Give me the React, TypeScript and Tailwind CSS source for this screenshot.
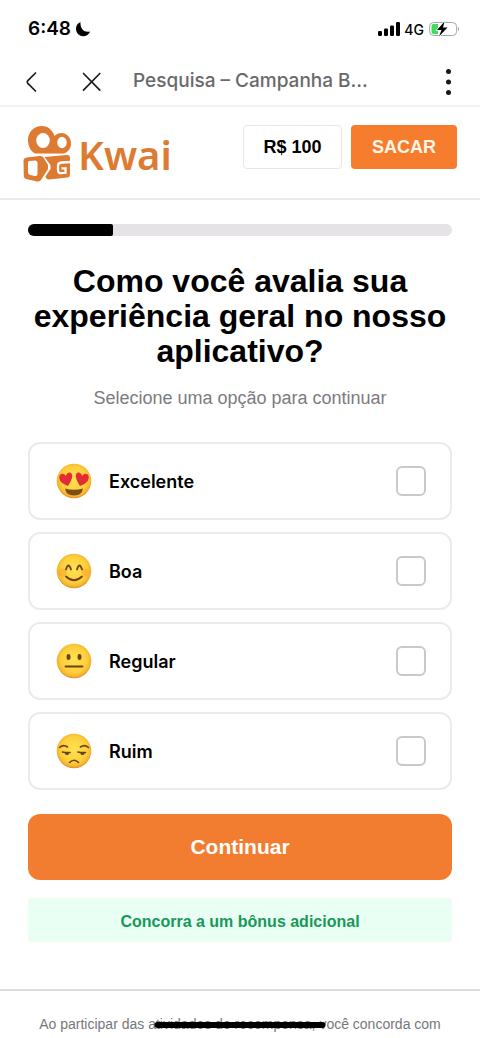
import { useState } from "react"
import type { ReactNode } from "react"
import { clsx } from "clsx"

const OPTIONS = [
  { id: "excelente", label: "Excelente", face: <HeartEyes /> },
  { id: "boa", label: "Boa", face: <Smiling /> },
  { id: "regular", label: "Regular", face: <Neutral /> },
  { id: "ruim", label: "Ruim", face: <Unamused /> },
]

export default function App() {
  const [selected, setSelected] = useState<string | null>(null)

  return (
    <div className="h-screen overflow-hidden bg-white font-['Liberation_Sans',sans-serif] text-black">
      <StatusBar />
      <BrowserBar />
      <Header />

      <main className="px-7 pt-6">
        {/* Progress */}
        <div className="h-3 overflow-hidden rounded-full bg-[#e5e3e6]">
          <div className="h-full w-1/5 rounded-r-xs bg-black" />
        </div>

        <h1 className="mt-7 text-center text-[32px] leading-[35px] font-bold">
          Como você avalia sua experiência geral no nosso aplicativo?
        </h1>
        <p className="mt-[15px] text-center text-[18px] leading-7 text-[#7b7b7f]">
          Selecione uma opção para continuar
        </p>

        <div className="mt-[30px] space-y-3">
          {OPTIONS.map((option) => (
            <label
              key={option.id}
              className="flex h-[78px] cursor-pointer items-center rounded-xl border-2 border-[#ebeaec] pr-6 pl-[26px]"
            >
              {option.face}
              <span className="ml-[17px] flex-1 font-['Inter',sans-serif] text-[18px] font-semibold">
                {option.label}
              </span>
              <input
                type="checkbox"
                checked={selected === option.id}
                onChange={() => setSelected(selected === option.id ? null : option.id)}
                className={clsx(
                  "size-[30px] appearance-none rounded-md border-2 border-[#c9c8ca]",
                  selected === option.id ? "bg-[#f37e31]" : "bg-white"
                )}
              />
            </label>
          ))}
        </div>

        <button className="mt-6 h-[66px] w-full rounded-xl bg-[#f27d30] text-[21px] font-bold text-white">
          Continuar
        </button>
        <div className="mt-[18px] rounded bg-[#eafff3] pt-3 pb-2 text-center text-[16px] leading-6 font-bold text-[#17985a]">
          Concorra a um bônus adicional
        </div>
      </main>

      <footer className="mt-[47px] border-t-2 border-[#dcdcdd] px-7 pt-[23px] text-center text-[14px] leading-5 text-[#77777a]">
        Ao participar das atividades de recompensa, você concorda com
      </footer>
      {/* Home indicator */}
      <div className="fixed bottom-2.5 left-1/2 h-1.5 w-[171px] -translate-x-1/2 rounded-full bg-black" />
    </div>
  )
}

function StatusBar() {
  return (
    <div className="flex h-[58px] items-center justify-between pr-5 pl-7 font-['Inter',sans-serif]">
      <div className="flex items-center gap-1">
        <span className="text-[19px] font-semibold">6:48</span>
        <svg className="size-4" viewBox="0 0 16 16" aria-hidden="true">
          <path d="M5.500 1C.2 3-.3 9.800 3.200 13.200c3.600 3.400 10 2.400 12-2.800C9.800 12.200 4.800 8 5.500 1Z" />
        </svg>
      </div>
      <div className="flex items-center gap-1">
        <svg className="h-3.5 w-[22px]" viewBox="0 0 22 14" aria-hidden="true">
          <rect x="0" y="9" width="4" height="5" rx="1.200" />
          <rect x="6" y="6.500" width="4" height="7.500" rx="1.200" />
          <rect x="12" y="3.500" width="4" height="10.500" rx="1.200" />
          <rect x="18" y="0" width="4" height="14" rx="1.200" />
        </svg>
        <span className="text-[14px] font-medium">4G</span>
        <svg className="h-4 w-8" viewBox="0 0 32 16" aria-hidden="true">
          <rect x="1.600" y="1.500" width="27" height="13" rx="4" fill="none" stroke="#a5a5a5" />
          <path d="M5.500 3H10v10H5.500Q3.500 13 3.500 11V5Q3.500 3 5.500 3Z" fill="#43d95c" />
          <path d="M30 5.500v5q2-2.500 0-5" fill="#a5a5a5" />
          <path d="M16.500 0.500L9 9h4.500L11 15.500 19.500 6.500H15Z" stroke="#fff" strokeWidth="1.500" paintOrder="stroke" />
        </svg>
      </div>
    </div>
  )
}

function BrowserBar() {
  return (
    <div className="flex h-[49px] items-center border-b-2 border-[#f3f3f4] px-5">
      <button aria-label="Voltar" className="w-6">
        <svg className="h-6 w-6" viewBox="0 0 24 24" fill="none" stroke="#1c1c1f" strokeWidth="1.700" strokeLinecap="round" strokeLinejoin="round">
          <path d="M15.500 3L7.800 10.700Q6.600 12 7.800 13.300L15.500 21" />
        </svg>
      </button>
      <button aria-label="Fechar" className="ml-9">
        <svg className="size-6" viewBox="0 0 24 24" fill="none" stroke="#1c1c1f" strokeWidth="1.700" strokeLinecap="round">
          <path d="M3.500 3.500L19.800 20.200M19.800 3.500L3.500 20.200" />
        </svg>
      </button>
      <span className="ml-[29px] flex-1 truncate font-['Inter',sans-serif] text-[19px] font-medium text-[#69696c]">
        Pesquisa – Campanha B...
      </span>
      <button aria-label="Mais opções">
        <svg className="h-8 w-6" viewBox="0 0 24 32" fill="#161618">
          <circle cx="12.500" cy="5.500" r="2.500" />
          <circle cx="12.500" cy="16" r="2.500" />
          <circle cx="12.500" cy="26.500" r="2.500" />
        </svg>
      </button>
    </div>
  )
}

function Header() {
  return (
    <header className="flex h-[93px] items-start justify-between border-b-2 border-[#e9e8ea] pt-[18px] pr-[23px] pl-[22px]">
      <div className="flex items-center gap-1.5">
        <KwaiMark />
        <span className="font-['Noto_Sans',sans-serif] text-[40px] leading-[60px] font-semibold text-[#dc7b31]">
          Kwai
        </span>
      </div>
      <div className="flex gap-[9px] text-[18px] font-bold">
        <div className="flex h-11 w-[99px] items-center justify-center rounded border border-[#e8e6e8]">R$ 100</div>
        <button className="h-11 w-[106px] rounded bg-[#f67d2e] text-[#fff6e8]">SACAR</button>
      </div>
    </header>
  )
}

function KwaiMark() {
  return (
    <svg className="h-[58px] w-[50px]" viewBox="0 0 50 58" aria-hidden="true">
      <path
        d="M20 0C12 0 6 6 6 14C6 20 8.500 25 13 27.500H42C46.500 26 49 22 49 17.500C49 11.500 44.500 7 39.500 7C36.500 7 34.500 8 32.500 10C30.500 4 26 0 20 0Z"
        fill="#dc7b31"
      />
      <ellipse cx="21" cy="14.500" rx="6.800" ry="7.500" fill="#fff" />
      <ellipse cx="40" cy="16.500" rx="4.700" ry="5.800" fill="#fff" />
      <path d="M5 31.500L17 30Q20 29.500 21.500 31.500L26 39V43L19 54Q17.500 56 15 55.500L4 53Q2 52.500 1.800 50L1.500 34.500Q1.500 32 5 31.500Z" fill="#dc7b31" />
      <path d="M7.500 35L13 34.500Q15.500 34.500 15.500 37V48Q15.500 50.500 13 50L8 49Q6 48.500 6 46V37Q6 35.200 7.500 35Z" fill="#fff" />
      <path d="M22.500 31L45 29Q48 29 48 32V48.500Q48 51 45.500 51.500L27 53.500Q24 53.500 23.500 50.500L28.500 43V39Z" fill="#dc7b31" />
      <path d="M49 36L39.500 36.500Q36 36.800 36 40V44Q36 47.500 39.500 47.200L43.500 46.800V42.300H39.500" fill="none" stroke="#fff" strokeWidth="2.300" />
    </svg>
  )
}

function Face({ children }: { children: ReactNode }) {
  return (
    <svg className="size-9 shrink-0" viewBox="0 0 36 36" aria-hidden="true">
      <defs>
        <radialGradient id="face" cx="50%" cy="46%" r="54%">
          <stop offset="0" stopColor="#ffe252" />
          <stop offset="0.700" stopColor="#fdcf3b" />
          <stop offset="0.900" stopColor="#f6b32e" />
          <stop offset="1" stopColor="#dd8620" />
        </radialGradient>
      </defs>
      <circle cx="18" cy="18" r="17.300" fill="url(#face)" />
      {children}
    </svg>
  )
}

function HeartEyes() {
  return (
    <Face>
      <path d="M12 23Q4.500 20.500 3.300 15.500Q2.800 11.500 6.200 10.800Q8.600 10.600 9.800 13Q11 8.800 14 9.500Q17.200 10.700 15.800 15.500Q14.600 19.500 12 23Z" fill="#e32d35" />
      <path d="M24 23Q31.500 20.500 32.700 15.500Q33.200 11.500 29.800 10.800Q27.400 10.600 26.200 13Q25 8.800 22 9.500Q18.800 10.700 20.200 15.500Q21.400 19.500 24 23Z" fill="#e32d35" />
      <path d="M9 25.500Q18 28 27 25.500Q26 32.500 18 32.500T9 25.500Z" fill="#7b4c15" />
    </Face>
  )
}

function Smiling() {
  return (
    <Face>
      <circle cx="6.500" cy="19.500" r="4" fill="#f58c2b" opacity="0.350" />
      <circle cx="29.500" cy="19.500" r="4" fill="#f58c2b" opacity="0.350" />
      <g fill="none" stroke="#6b4316" strokeWidth="1.800" strokeLinecap="round">
        <path d="M10 16.500Q12.500 8.500 15 16.500M21 16.500Q23.500 8.500 26 16.500M10 23.500Q18 31 26 23.500" />
      </g>
    </Face>
  )
}

function Neutral() {
  return (
    <Face>
      <ellipse cx="12.500" cy="14" rx="2" ry="3" fill="#6b4316" />
      <ellipse cx="23.500" cy="14" rx="2" ry="3" fill="#6b4316" />
      <path d="M9.500 23.500H26.500" stroke="#6b4316" strokeWidth="1.800" strokeLinecap="round" />
    </Face>
  )
}

function Unamused() {
  return (
    <Face>
      <g fill="none" stroke="#6b4316" strokeWidth="1.600" strokeLinecap="round">
        <path d="M3.500 14.500Q7.500 11 11.500 14M24.500 14Q28.500 11 32.500 14.500" />
        <path d="M6.500 19Q10 20 14 19.500M22 19Q25.500 20 29.500 19.500M13.500 29.500Q18 25 22.500 29.500" />
      </g>
      <ellipse cx="11" cy="20.500" rx="2" ry="1.500" fill="#6b4316" />
      <ellipse cx="26.500" cy="20.500" rx="2" ry="1.500" fill="#6b4316" />
    </Face>
  )
}
